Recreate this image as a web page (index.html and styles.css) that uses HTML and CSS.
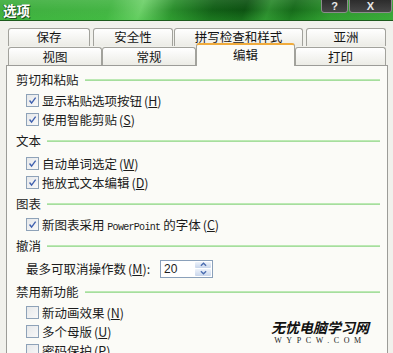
FILE: index.html
```html
<!DOCTYPE html>
<html lang="zh-CN">
<head>
    <meta charset="UTF-8">
    <meta name="viewport" content="width=device-width, initial-scale=1.0">
    <title>选项</title>
    <link rel="stylesheet" href="styles.css">
</head>
<body>
    <div class="dialog">
        <div class="titlebar">
            <span class="title">选项</span>
            <div class="caption-buttons">
                <span class="cap-btn cap-help">?</span>
                <span class="cap-btn cap-close">X</span>
            </div>
        </div>

        <div class="tabs">
            <div class="tab-row tab-row-back">
                <div class="tab tab-save">保存</div>
                <div class="tab tab-security">安全性</div>
                <div class="tab tab-spelling">拼写检查和样式</div>
                <div class="tab tab-asia">亚洲</div>
            </div>
            <div class="tab-row tab-row-front">
                <div class="tab tab-view">视图</div>
                <div class="tab tab-general">常规</div>
                <div class="tab tab-edit active">编辑</div>
                <div class="tab tab-print">打印</div>
            </div>
        </div>

        <div class="panel">
            <div class="group-title"><span>剪切和粘贴</span></div>
            <div class="option">
                <span class="box checked"><svg viewBox="0 0 13 13"><path d="M3 6.5 L5.4 9.5 L10.2 3"/></svg></span>
                <span>显示粘贴选项按钮<span class="key">(<u>H</u>)</span></span>
            </div>
            <div class="option">
                <span class="box checked"><svg viewBox="0 0 13 13"><path d="M3 6.5 L5.4 9.5 L10.2 3"/></svg></span>
                <span>使用智能剪贴<span class="key">(<u>S</u>)</span></span>
            </div>

            <div class="group-title group-gap"><span>文本</span></div>
            <div class="option">
                <span class="box checked"><svg viewBox="0 0 13 13"><path d="M3 6.5 L5.4 9.5 L10.2 3"/></svg></span>
                <span>自动单词选定<span class="key">(<u>W</u>)</span></span>
            </div>
            <div class="option">
                <span class="box checked"><svg viewBox="0 0 13 13"><path d="M3 6.5 L5.4 9.5 L10.2 3"/></svg></span>
                <span>拖放式文本编辑<span class="key">(<u>D</u>)</span></span>
            </div>

            <div class="group-title"><span>图表</span></div>
            <div class="option">
                <span class="box checked"><svg viewBox="0 0 13 13"><path d="M3 6.5 L5.4 9.5 L10.2 3"/></svg></span>
                <span>新图表采用 <span class="mono">PowerPoint</span> 的字体<span class="key">(<u>C</u>)</span></span>
            </div>

            <div class="group-title"><span>撤消</span></div>
            <div class="option spin-row">
                <span class="spin-label">最多可取消操作数<span class="key">(<u>M</u>)</span>:</span>
                <div class="spin">
                    <span class="spin-value">20</span>
                    <div class="spin-buttons">
                        <span class="spin-btn"><svg viewBox="0 0 8 5"><path d="M1 4 L4 1 L7 4"/></svg></span>
                        <span class="spin-btn"><svg viewBox="0 0 8 5"><path d="M1 1 L4 4 L7 1"/></svg></span>
                    </div>
                </div>
            </div>

            <div class="group-title"><span>禁用新功能</span></div>
            <div class="option">
                <span class="box"></span>
                <span>新动画效果<span class="key">(<u>N</u>)</span></span>
            </div>
            <div class="option">
                <span class="box"></span>
                <span>多个母版<span class="key">(<u>U</u>)</span></span>
            </div>
            <div class="option">
                <span class="box"></span>
                <span>密码保护<span class="key">(<u>P</u>)</span></span>
            </div>
        </div>

        <div class="watermark">
            <div class="wm-cn">无忧电脑学习网</div>
            <div class="wm-en">WYPCW.COM</div>
        </div>
    </div>
</body>
</html>
```

FILE: styles.css
```css
body {
    margin: 0;
    width: 393px;
    height: 353px;
    overflow: hidden;
    background: #f1f1ec;
    font-family: "Noto Sans CJK SC", "Noto Sans", sans-serif;
    font-size: 12.5px;
    color: #1c1c1c;
}

.dialog {
    position: relative;
    height: 353px;
}

/* title bar */
.titlebar {
    height: 20px;
    display: flex;
    align-items: center;
    justify-content: space-between;
    border-bottom: 1px solid #1c5a1c;
    background:
        linear-gradient(to bottom, rgba(255,255,255,0.08), rgba(0,0,0,0) 50%, rgba(60,200,60,0.25)),
        linear-gradient(110deg, #3fae3f 0%, #44b544 28%, #6ed06a 36%, #2b8f2d 44%, #125f17 54%, #0d5212 62%, #2c8a2e 68%, #166a1a 74%, #2f952f 84%, #38a338 100%);
}

.title {
    margin-left: 3px;
    color: #fff;
    font-weight: bold;
    font-size: 13.5px;
    line-height: 20px;
    text-shadow: 1px 1px 0 #1d4f1d, -1px 0 0 #2a6a2a;
}

.caption-buttons {
    display: flex;
    align-self: flex-start;
    margin-right: 1px;
    margin-top: -2px;
}

.cap-btn {
    height: 12px;
    display: flex;
    align-items: center;
    justify-content: center;
    color: #e8e8e8;
    font-family: "Liberation Sans", sans-serif;
    font-weight: bold;
    font-size: 11px;
    padding-top: 1px;
    background: linear-gradient(to bottom, #2a2a2a, #474747);
    border: 1px solid #8c8c8c;
    border-radius: 0 0 3px 3px;
}

.cap-help {
    width: 25px;
    margin-right: 1px;
}

.cap-close {
    width: 41px;
}

/* tabs */
.tabs {
    padding-top: 7px;
}

.tab-row {
    display: flex;
    padding-left: 8px;
}

.tab-row-back {
    height: 19px;
}

.tab-row-back .tab {
    line-height: 16px;
}

.tab-row-front {
    height: 18px;
    align-items: flex-end;
}

.tab {
    box-sizing: border-box;
    height: 18px;
    border: 1px solid #a2a29c;
    border-bottom: none;
    border-radius: 3px 3px 0 0;
    background: linear-gradient(to bottom, #ffffff, #ecece6);
    text-align: center;
    line-height: 17px;
    color: #151515;
}

.tab-save { width: 82px; margin-right: 3px; }
.tab-security { width: 80px; margin-right: 1px; }
.tab-spelling { width: 129px; margin-right: 3px; }
.tab-asia { width: 80px; }

.tab-view { width: 94px; }
.tab-general { width: 94px; }
.tab-edit { width: 99px; }
.tab-print { width: 91px; }

.tab.active {
    position: relative;
    z-index: 2;
    height: 23px;
    margin-bottom: -1px;
    line-height: 19px;
    background: #fbfbf7;
    border-top: 2px solid #f0ab3c;
}

/* panel */
.panel {
    position: relative;
    z-index: 1;
    height: 300px;
    margin: 0 5px 0 6px;
    padding-top: 2px;
    border: 1px solid #9c9c98;
    background: #fbfbf7;
}

.group-title {
    height: 23px;
    display: flex;
    align-items: center;
    padding-left: 9px;
}

.group-gap {
    margin-bottom: 2px;
}

.group-title::after {
    content: "";
    flex: 1;
    height: 2px;
    margin: 0 7px 0 6px;
    background: linear-gradient(to bottom, #c9efc0, #9ad892);
}

.option {
    height: 19px;
    display: flex;
    align-items: center;
    padding-left: 19px;
    white-space: nowrap;
}

.box {
    box-sizing: border-box;
    width: 13px;
    height: 13px;
    margin-right: 3px;
    border: 1px solid #8ea2b8;
    background: linear-gradient(135deg, #e6e8ea, #f8f8f8);
}

.box svg {
    display: block;
    width: 11px;
    height: 11px;
}

.box svg path {
    fill: none;
    stroke: #3e5fae;
    stroke-width: 1.6;
}

.key {
    margin-left: 2px;
}

.mono {
    font-family: "Liberation Mono", monospace;
    font-size: 10px;
    letter-spacing: -0.7px;
}

/* undo spinner */
.spin-row {
    height: 23px;
}

.spin-label {
    width: 134px;
}

.spin {
    box-sizing: border-box;
    width: 53px;
    height: 18px;
    display: flex;
    justify-content: space-between;
    border: 1px solid #8aa0ba;
    background: #fff;
}

.spin-value {
    padding-left: 3px;
    font-family: "Liberation Sans", sans-serif;
    font-size: 12px;
    line-height: 16px;
}

.spin-buttons {
    width: 16px;
    display: flex;
    flex-direction: column;
    gap: 1px;
    padding: 1px;
}

.spin-btn {
    flex: 1;
    display: flex;
    align-items: center;
    justify-content: center;
    background: linear-gradient(to bottom, #eef3fb, #c9d6ec);
    border-radius: 1px;
}

.spin-btn svg {
    width: 7px;
    height: 5px;
}

.spin-btn svg path {
    fill: none;
    stroke: #4a6cb0;
    stroke-width: 1.5;
}

/* watermark */
.watermark {
    position: absolute;
    z-index: 3;
    left: 270px;
    top: 319px;
    width: 100px;
    text-align: center;
}

.wm-cn {
    font-family: "Noto Sans CJK SC", serif;
    font-weight: bold;
    font-style: italic;
    font-size: 14px;
    line-height: 17px;
    color: #111;
}

.wm-en {
    font-family: "Liberation Serif", serif;
    font-size: 8px;
    line-height: 10px;
    letter-spacing: 4.6px;
    color: #222;
}
```
